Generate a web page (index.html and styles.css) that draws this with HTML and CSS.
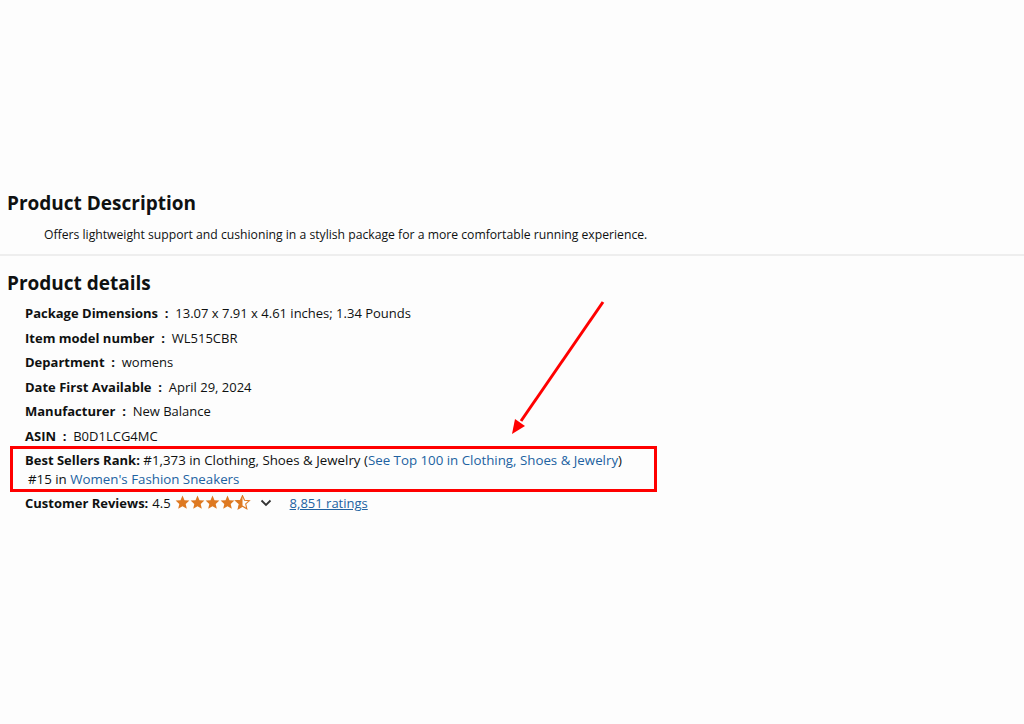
FILE: index.html
```html
<!DOCTYPE html>
<html lang="en">
<head>
    <meta charset="UTF-8">
    <meta name="viewport" content="width=device-width, initial-scale=1.0">
    <title>Product details</title>
    <link rel="stylesheet" href="styles.css">
</head>
<body>
    <div class="page">
        <!-- Описание -->
        <section class="description">
            <h2>Product Description</h2>
            <p class="desc-text">Offers lightweight support and cushioning in a stylish package for a more comfortable running experience.</p>
        </section>

        <!-- Детали -->
        <section class="details">
            <h2>Product details</h2>
            <ul class="detail-list">
                <li><span class="label">Package Dimensions &nbsp;:&nbsp;</span> 13.07 x 7.91 x 4.61 inches; 1.34 Pounds</li>
                <li><span class="label">Item model number &nbsp;:&nbsp;</span> WL515CBR</li>
                <li><span class="label">Department &nbsp;:&nbsp;</span> womens</li>
                <li><span class="label">Date First Available &nbsp;:&nbsp;</span> April 29, 2024</li>
                <li><span class="label">Manufacturer &nbsp;:&nbsp;</span> New Balance</li>
                <li><span class="label">ASIN &nbsp;:&nbsp;</span> B0D1LCG4MC</li>
            </ul>

            <div class="rank-box">
                <div><span class="label">Best Sellers Rank:</span> #1,373 in Clothing, Shoes &amp; Jewelry (<a href="#">See Top 100 in Clothing, Shoes &amp; Jewelry</a>)</div>
                <div class="sub-rank">#15 in <a href="#">Women's Fashion Sneakers</a></div>
            </div>

            <div class="reviews">
                <span class="label">Customer Reviews:</span>
                <span class="score">4.5</span>
                <span class="stars">
                    <svg width="76" height="15" viewBox="0 0 76 15">
                        <defs>
                            <path id="star" d="M7.5 0.6 L9.5 5.2 L14.4 5.6 L10.7 8.9 L11.8 13.8 L7.5 11.2 L3.2 13.8 L4.3 8.9 L0.6 5.6 L5.5 5.2 Z"/>
                            <clipPath id="half"><rect x="0" y="0" width="7.5" height="15"/></clipPath>
                        </defs>
                        <use href="#star" x="0" fill="#de7921"/>
                        <use href="#star" x="15" fill="#de7921"/>
                        <use href="#star" x="30" fill="#de7921"/>
                        <use href="#star" x="45" fill="#de7921"/>
                        <g transform="translate(60 0)">
                            <use href="#star" fill="none" stroke="#de7921" stroke-width="1.1"/>
                            <use href="#star" fill="#de7921" clip-path="url(#half)"/>
                        </g>
                    </svg>
                </span>
                <svg class="chevron" width="12" height="8" viewBox="0 0 12 8"><path d="M1.5 1.5 L6 6 L10.5 1.5" fill="none" stroke="#333" stroke-width="1.8"/></svg>
                <a href="#" class="ratings">8,851 ratings</a>
            </div>
        </section>

        <!-- Стрелка-указатель -->
        <svg class="arrow" width="110" height="145" viewBox="0 0 110 145">
            <line x1="103" y1="7" x2="21" y2="126" stroke="#f00" stroke-width="3"/>
            <path d="M12 139 L25 131 L15 124 Z" fill="#f00"/>
        </svg>
    </div>
</body>
</html>
```

FILE: styles.css
```css
body {
    margin: 0;
    background-color: #fdfdfd;
    font-family: "Open Sans", Arial, sans-serif;
    color: #0f1111;
}
.page {
    position: relative;
    padding-top: 190px;
    min-height: 534px;
}
h2 {
    font-size: 19px;
    font-weight: bold;
    margin: 0;
    padding-left: 7px;
    color: #0f1111;
}
.description {
    border-bottom: 2px solid #eeeeee;
    padding-bottom: 11px;
}
.desc-text {
    margin: 10px 0 0 44px;
    font-size: 12.2px;
}
.details {
    padding-top: 14px;
}
.detail-list {
    list-style: none;
    margin: 5px 0 0 25px;
    padding: 0;
    font-size: 13px;
}
.detail-list li {
    height: 24.6px;
    line-height: 24.6px;
}
.label {
    font-weight: bold;
}
a {
    color: #2162a1;
    text-decoration: none;
}
.rank-box {
    margin: -3px 0 0 10px;
    width: 629px;
    border: 3px solid #f00;
    padding: 2px 0 0 12px;
    font-size: 13.3px;
    line-height: 19px;
}
.rank-box .label {
    font-size: 13px;
}
.sub-rank {
    padding-left: 3px;
}
.reviews {
    display: flex;
    align-items: center;
    gap: 4px;
    margin: 0 0 0 25px;
    font-size: 13px;
    height: 22px;
}
.stars svg {
    display: block;
}
.chevron {
    margin-left: 5px;
}
.ratings {
    margin-left: 14px;
    text-decoration: underline;
}
.arrow {
    position: absolute;
    left: 500px;
    top: 295px;
}
```
